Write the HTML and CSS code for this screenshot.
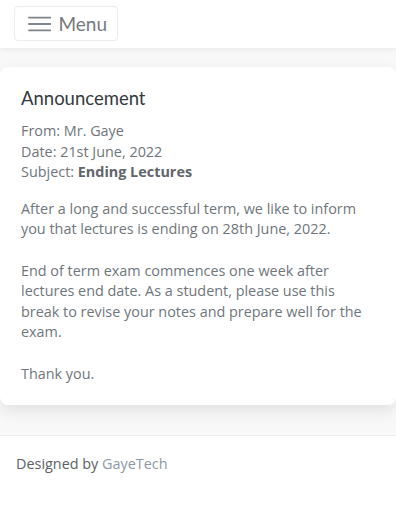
FILE: index.html
```html
<!DOCTYPE html>
<html lang="en">
<head>
<meta charset="utf-8">
<title>Announcement</title>
<link rel="stylesheet" href="styles.css">
</head>
<body>
<nav class="navbar">
  <button class="menu-btn" type="button">
    <svg class="menu-icon" width="24" height="16" viewBox="0 0 24 16" aria-hidden="true">
      <path d="M1 1.5h22M1 8h22M1 14.5h22" stroke="#808589" stroke-width="1.8" stroke-linecap="round" fill="none"/>
    </svg>
    <span class="menu-label">Menu</span>
  </button>
</nav>
<main class="content">
  <article class="card">
    <h1 class="card-title">Announcement</h1>
    <div class="meta">
      <div>From: Mr. Gaye</div>
      <div>Date: 21st June, 2022</div>
      <div>Subject: <strong>Ending Lectures</strong></div>
    </div>
    <p class="para">After a long and successful term, we like to inform you that lectures is ending on 28th June, 2022.</p>
    <p class="para">End of term exam commences one week after lectures end date. As a student, please use this break to revise your notes and prepare well for the exam.</p>
    <p class="para">Thank you.</p>
  </article>
</main>
<footer class="footer">
  Designed by <a class="footer-link" href="#">GayeTech</a>
</footer>
</body>
</html>
```

FILE: styles.css
```css
* { box-sizing: border-box; }
html, body { margin: 0; padding: 0; }
body {
  font-family: "Open Sans", "Liberation Sans", sans-serif;
  background: #ffffff;
  color: #6f767c;
}
.navbar {
  height: 48px;
  background: #fff;
  padding: 6px 14px;
  position: relative;
  z-index: 2;
  box-shadow: 0 2px 5px rgba(0,0,0,0.05);
}
.menu-btn {
  display: flex;
  align-items: center;
  gap: 7px;
  height: 35px;
  width: 104px;
  padding: 0 10px 0 13px;
  background: #fff;
  border: 1px solid #ececec;
  border-radius: 4px;
  font-family: Lato, "Open Sans", sans-serif;
  font-size: 19px;
  color: #74797e;
}
.menu-icon { display: block; }
.content {
  background: #f8f8f8;
  padding: 19px 0 30px;
}
.card {
  background: #fff;
  border-radius: 8px;
  box-shadow: 0 6px 16px rgba(0,0,0,0.09);
  padding: 20px 21px 21px;
}
.card-title {
  margin: 0 0 11px;
  font-family: Lato, "Open Sans", sans-serif;
  font-weight: 400;
  font-size: 18.5px;
  line-height: 23px;
  color: #343a40;
}
.meta {
  font-size: 14.4px;
  line-height: 20.6px;
  margin-bottom: 16px;
}
.meta strong { font-weight: 700; color: #5f666c; }
.para {
  margin: 0 0 20.6px;
  font-size: 14.4px;
  line-height: 20.6px;
}
.para:last-child { margin-bottom: 0; }
.footer {
  border-top: 1px solid #eeeeee;
  padding: 18px 16px;
  font-size: 14.4px;
  line-height: 20px;
  color: #5c6166;
}
.footer-link {
  color: #8d9aa3;
  text-decoration: none;
}
```
